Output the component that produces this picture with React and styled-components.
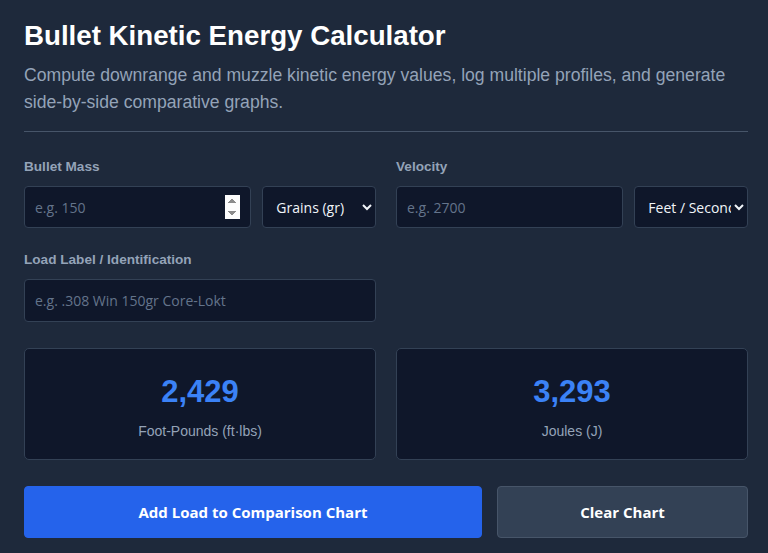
import styled, { createGlobalStyle } from "styled-components";

const GlobalStyle = createGlobalStyle`
  html, body {
    margin: 0;
    padding: 0;
    background: #1e293b;
  }
  body {
    font-family: "Liberation Sans", Arial, sans-serif;
    color: #f1f5f9;
  }
  * {
    box-sizing: border-box;
  }
`;

const Page = styled.div`
  padding: 20px 20px 20px 24px;
`;

const Title = styled.h1`
  margin: 0;
  font-size: 27.7px;
  line-height: 32px;
  font-weight: 700;
  color: #ffffff;
`;

const Subtitle = styled.p`
  margin: 10px 0 0;
  font-size: 17.6px;
  line-height: 27px;
  color: #94a3b8;
`;

const Divider = styled.hr`
  border: none;
  border-top: 1px solid #475569;
  margin: 15px 0 0;
`;

const FormGrid = styled.div`
  display: grid;
  grid-template-columns: 1fr 1fr;
  column-gap: 20px;
  row-gap: 24px;
  margin-top: 27px;
`;

const Field = styled.div`
  display: flex;
  flex-direction: column;
  gap: 12px;
`;

const Label = styled.label`
  font-size: 13.6px;
  font-weight: 700;
  color: #94a3b8;
  line-height: 15px;
`;

const Row = styled.div`
  display: grid;
  grid-template-columns: 2fr 1fr;
  gap: 11px;
`;

const Input = styled.input`
  width: 100%;
  min-width: 0;
  height: ${(p) => p.$h || 42}px;
  background: #0f172a;
  border: 1px solid #334155;
  border-radius: 4px;
  padding: 0 10px;
  font-family: "Open Sans", sans-serif;
  font-size: 14px;
  color: #f1f5f9;
  outline: none;
  &::placeholder {
    color: #64748b;
  }
  &::-webkit-inner-spin-button {
    opacity: ${(p) => (p.$spin ? 1 : 0)};
    height: 24px;
  }
`;

const Select = styled.select`
  width: 100%;
  min-width: 0;
  height: 42px;
  background: #0f172a;
  border: 1px solid #334155;
  border-radius: 4px;
  padding: 0 0 0 9px;
  font-family: "Open Sans", sans-serif;
  font-size: 14px;
  color: #f1f5f9;
  color-scheme: dark;
  outline: none;
`;

const Results = styled.div`
  display: grid;
  grid-template-columns: 1fr 1fr;
  gap: 20px;
  margin-top: 26px;
`;

const Card = styled.div`
  height: 112px;
  padding-top: 6px;
  background: #0f172a;
  border: 1px solid #334155;
  border-radius: 5px;
  display: flex;
  flex-direction: column;
  align-items: center;
  justify-content: center;
  gap: 14px;
`;

const Value = styled.div`
  font-size: 31px;
  font-weight: 700;
  color: #3b82f6;
  line-height: 34px;
`;

const Unit = styled.div`
  font-size: 14px;
  color: #94a3b8;
  line-height: 16px;
`;

const Actions = styled.div`
  display: grid;
  grid-template-columns: 458fr 251fr;
  gap: 15px;
  margin-top: 26px;
`;

const Button = styled.button`
  height: 52px;
  border-radius: 4px;
  border: 1px solid ${(p) => (p.$primary ? "#2563eb" : "#475569")};
  background: ${(p) => (p.$primary ? "#2563eb" : "#334155")};
  color: #ffffff;
  font-family: "Open Sans", sans-serif;
  font-size: 15px;
  font-weight: 700;
  cursor: pointer;
`;

export default function App() {
  return (
    <Page>
      <GlobalStyle />
      <Title>Bullet Kinetic Energy Calculator</Title>
      <Subtitle>
        Compute downrange and muzzle kinetic energy values, log multiple
        profiles, and generate side-by-side comparative graphs.
      </Subtitle>
      <Divider />
      <FormGrid>
        <Field>
          <Label>Bullet Mass</Label>
          <Row>
            <Input type="number" placeholder="e.g. 150" $spin />
            <Select defaultValue="gr">
              <option value="gr">Grains (gr)</option>
              <option value="g">Grams (g)</option>
            </Select>
          </Row>
        </Field>
        <Field>
          <Label>Velocity</Label>
          <Row>
            <Input type="number" placeholder="e.g. 2700" />
            <Select defaultValue="fps">
              <option value="fps">Feet / Second</option>
              <option value="mps">Meters / Second</option>
            </Select>
          </Row>
        </Field>
        <Field>
          <Label>Load Label / Identification</Label>
          <Input type="text" placeholder="e.g. .308 Win 150gr Core-Lokt" $h={43} />
        </Field>
      </FormGrid>
      <Results>
        <Card>
          <Value>2,429</Value>
          <Unit>Foot-Pounds (ft·lbs)</Unit>
        </Card>
        <Card>
          <Value>3,293</Value>
          <Unit>Joules (J)</Unit>
        </Card>
      </Results>
      <Actions>
        <Button $primary>Add Load to Comparison Chart</Button>
        <Button>Clear Chart</Button>
      </Actions>
    </Page>
  );
}
